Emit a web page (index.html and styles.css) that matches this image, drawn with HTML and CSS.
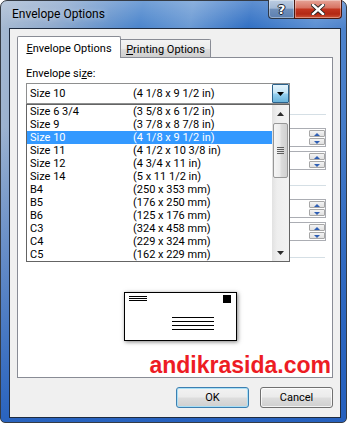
FILE: index.html
```html
<!DOCTYPE html>
<html lang="en">
<head>
    <meta charset="UTF-8">
    <meta name="viewport" content="width=device-width, initial-scale=1.0">
    <title>Envelope Options</title>
    <link rel="stylesheet" href="styles.css">
</head>
<body>
    <div class="window">
        <div class="titlebar">
            <span class="title">Envelope Options</span>
            <div class="caption-buttons">
                <div class="cap-btn help">?</div>
                <div class="cap-btn close">
                    <svg width="14" height="11" viewBox="0 0 14 11">
                        <path d="M2 1 L12 10 M12 1 L2 10" stroke="#1f1f1f" stroke-width="4.2" stroke-linecap="square"/>
                        <path d="M2 1 L12 10 M12 1 L2 10" stroke="#fff" stroke-width="2.4" stroke-linecap="square"/>
                    </svg>
                </div>
            </div>
        </div>

        <div class="client">
            <div class="tabs">
                <div class="tab active"><u>E</u>nvelope Options</div>
                <div class="tab"><u>P</u>rinting Options</div>
            </div>

            <div class="panel">
                <div class="label">Envelope si<u>z</u>e:</div>

                <div class="combo-wrap">
                    <div class="combo">
                        <div class="row combo-value"><span>Size 10</span><span>(4 1/8 x 9 1/2 in)</span></div>
                        <div class="combo-btn">
                            <svg width="7" height="4" viewBox="0 0 7 4"><path d="M0 0 H7 L3.5 4 Z" fill="#000"/></svg>
                        </div>
                    </div>

                    <!-- open drop-down list, lies over the fields below -->
                    <div class="dropdown">
                        <div class="list">
                            <div class="row"><span>Size 6 3/4</span><span>(3 5/8 x 6 1/2 in)</span></div>
                            <div class="row"><span>Size 9</span><span>(3 7/8 x 8 7/8 in)</span></div>
                            <div class="row selected"><span>Size 10</span><span>(4 1/8 x 9 1/2 in)</span></div>
                            <div class="row"><span>Size 11</span><span>(4 1/2 x 10 3/8 in)</span></div>
                            <div class="row"><span>Size 12</span><span>(4 3/4 x 11 in)</span></div>
                            <div class="row"><span>Size 14</span><span>(5 x 11 1/2 in)</span></div>
                            <div class="row"><span>B4</span><span>(250 x 353 mm)</span></div>
                            <div class="row"><span>B5</span><span>(176 x 250 mm)</span></div>
                            <div class="row"><span>B6</span><span>(125 x 176 mm)</span></div>
                            <div class="row"><span>C3</span><span>(324 x 458 mm)</span></div>
                            <div class="row"><span>C4</span><span>(229 x 324 mm)</span></div>
                            <div class="row"><span>C5</span><span>(162 x 229 mm)</span></div>
                        </div>
                        <div class="scrollbar">
                            <div class="sb-arrow">
                                <svg width="7" height="4" viewBox="0 0 7 4"><path d="M0 4 H7 L3.5 0 Z" fill="#2b2b2b"/></svg>
                            </div>
                            <div class="sb-track">
                                <div class="sb-thumb">
                                    <div class="grip"><span></span><span></span><span></span><span></span></div>
                                </div>
                            </div>
                            <div class="sb-arrow">
                                <svg width="7" height="4" viewBox="0 0 7 4"><path d="M0 0 H7 L3.5 4 Z" fill="#2b2b2b"/></svg>
                            </div>
                        </div>
                    </div>
                </div>

                <div class="fields">
                    <div class="group">
                        <div class="spin-field">
                            <div class="spin"><span class="up"></span><span class="down"></span></div>
                        </div>
                        <div class="spin-field">
                            <div class="spin"><span class="up"></span><span class="down"></span></div>
                        </div>
                    </div>
                    <div class="group">
                        <div class="spin-field">
                            <div class="spin"><span class="up"></span><span class="down"></span></div>
                        </div>
                        <div class="spin-field">
                            <div class="spin"><span class="up"></span><span class="down"></span></div>
                        </div>
                    </div>
                    <div class="group last"></div>
                </div>

                <div class="envelope">
                    <div class="env-top">
                        <div class="return-lines"><span></span><span></span><span></span></div>
                        <div class="stamp"></div>
                    </div>
                    <div class="address-lines"><span></span><span></span><span></span><span></span></div>
                </div>

                <div class="watermark">andikrasida.com</div>
            </div>

            <div class="buttons">
                <button class="btn default">OK</button>
                <button class="btn">Cancel</button>
            </div>
        </div>
    </div>
</body>
</html>
```

FILE: styles.css
```css
body {
    margin: 0;
    background: #fff;
    font-family: Roboto, "Noto Sans", sans-serif;
    font-size: 11px;
    color: #000;
}

.window {
    width: 347px;
    height: 423px;
    box-sizing: border-box;
    border: 1px solid #353b44;
    border-radius: 7px 7px 5px 5px;
    padding: 0 5px 4px 8px;
    display: flex;
    flex-direction: column;
    background:
        linear-gradient(180deg, rgba(255, 255, 255, 0.22) 0, rgba(255, 255, 255, 0) 27px),
        linear-gradient(180deg, rgba(37, 96, 190, 0) 30%, rgba(37, 96, 190, 0.95) 100%),
        linear-gradient(100deg, #a7bad2 0%, #8ea9cd 14%, #4b85cc 34%, #6b9ad4 46%, #3170c4 60%, #5b8fd2 76%, #2b64bb 100%);
}

/* title bar */
.titlebar {
    height: 27px;
    display: flex;
    align-items: flex-start;
}
.title {
    padding: 5px 0 0 3px;
    line-height: 16px;
    font-size: 12px;
    text-shadow: 0 0 6px rgba(255, 255, 255, 0.55);
}
.caption-buttons {
    margin: -1px -1px 0 auto;
    display: flex;
}
.cap-btn {
    height: 19px;
    box-sizing: border-box;
    border: 1px solid #2d3848;
    border-top: none;
    display: flex;
    align-items: center;
    justify-content: center;
    box-shadow: inset 0 0 0 1px rgba(255, 255, 255, 0.35);
}
.help {
    width: 26px;
    border-radius: 0 0 0 4px;
    border-right: none;
    background: linear-gradient(180deg, #bccde2 0%, #a3b9d5 45%, #6f8fba 52%, #5d80b1 100%);
    color: #fff;
    font-family: "DejaVu Sans", sans-serif;
    font-weight: bold;
    font-size: 13px;
    text-shadow: 0 0 1px #1b2433, 1px 0 0 #1b2433, -1px 0 0 #1b2433, 0 1px 0 #1b2433, 0 -1px 0 #1b2433;
}
.close {
    width: 48px;
    border-radius: 0 0 4px 0;
    border-color: #4a1810;
    background: linear-gradient(180deg, #e6a497 0%, #d87564 42%, #c2351f 52%, #b32814 78%, #cf5638 100%);
}

/* client area */
.client {
    flex: 1;
    border: 1px solid #1e2b3f;
    background: #f0f0f0;
    padding: 7px 7px 0 7px;
    display: flex;
    flex-direction: column;
}

.tabs {
    display: flex;
    align-items: flex-end;
    position: relative;
    z-index: 1;
}
.tab {
    box-sizing: border-box;
    border: 1px solid #898c95;
    border-bottom: none;
    text-align: center;
    line-height: 13px;
}
.tab.active {
    width: 104px;
    height: 22px;
    padding-top: 5px;
    margin-bottom: -1px;
    background: #fff;
    border-radius: 2px 2px 0 0;
    position: relative;
    z-index: 1;
}
.tab:not(.active) {
    width: 91px;
    height: 18px;
    padding-top: 3px;
    margin-left: -1px;
    border-radius: 0 2px 0 0;
    background: linear-gradient(180deg, #f3f3f3 0%, #ebebeb 50%, #dddddd 52%, #cfcfcf 100%);
}

.panel {
    border: 1px solid #898c95;
    background: #fff;
    width: 316px;
    box-sizing: border-box;
    padding: 9px 0 2px 0;
}

.label {
    line-height: 13px;
    padding-left: 8px;
}

/* combo box */
.combo-wrap {
    position: relative;
    margin: 3px 0 0 8px;
    width: 264px;
}
.combo {
    height: 21px;
    box-sizing: border-box;
    border: 1px solid #8e8f8f;
    display: flex;
    background: #fff;
}
.combo-value {
    flex: 1;
    line-height: 19px;
}
.combo-btn {
    width: 17px;
    box-sizing: border-box;
    border: 1px solid #2c628b;
    border-radius: 1px;
    background: linear-gradient(180deg, #e5f4fc 0%, #c4e5f6 48%, #98d1ef 52%, #68b3db 100%);
    display: flex;
    align-items: center;
    justify-content: center;
}

.row {
    display: grid;
    grid-template-columns: 103px 1fr;
    padding-left: 3px;
    white-space: nowrap;
}

.dropdown {
    position: absolute;
    top: 21px;
    left: 0;
    width: 264px;
    box-sizing: border-box;
    border: 1px solid #646464;
    background: #fff;
    display: flex;
    z-index: 2;
}
.list {
    flex: 1;
}
.list .row {
    height: 13px;
    line-height: 13px;
}
.list .row.selected {
    background: #3399ff;
    color: #fff;
}

.scrollbar {
    width: 17px;
    display: flex;
    flex-direction: column;
    background: linear-gradient(90deg, #e2e2e2 0%, #eeeeee 30%, #f2f2f2 100%);
}
.sb-arrow {
    height: 17px;
    display: flex;
    align-items: center;
    justify-content: center;
}
.sb-track {
    flex: 1;
    padding: 1px 1px 0 1px;
}
.sb-thumb {
    height: 55px;
    box-sizing: border-box;
    border: 1px solid #979797;
    border-radius: 2px;
    background: linear-gradient(90deg, #f5f5f5 0%, #ececec 45%, #dcdcdc 55%, #d0d0d0 100%);
    display: flex;
    align-items: center;
    justify-content: center;
}
.grip {
    display: flex;
    flex-direction: column;
    gap: 1px;
}
.grip span {
    width: 7px;
    height: 1px;
    background: #5f5f5f;
}

/* fields hidden behind the open list */
.fields {
    margin: 10px 6px 0 150px;
    height: 178px;
}
.group {
    border-top: 1px solid #d5dfe5;
    padding: 13px 0 15px 0;
    display: flex;
    flex-direction: column;
    gap: 4px;
}
.group + .group {
    padding-bottom: 16px;
}
.group.last {
    padding: 0;
    margin-right: 1px;
}
.spin-field {
    height: 19px;
    box-sizing: border-box;
    border: 1px solid #abadb3;
    background: #fff;
    display: flex;
    justify-content: flex-end;
    padding: 1px 0 1px 0;
}
.spin {
    width: 16px;
    display: flex;
    flex-direction: column;
    gap: 1px;
}
.spin span {
    flex: 1;
    box-sizing: border-box;
    border: 1px solid #a7a7a7;
    border-radius: 1px;
    background: linear-gradient(180deg, #f4f4f4, #e0e0e0);
    position: relative;
}
.spin span::after {
    content: "";
    position: absolute;
    left: 4px;
    top: 2px;
    border-left: 3px solid transparent;
    border-right: 3px solid transparent;
}
.spin .up::after {
    border-bottom: 3px solid #2f5fb4;
}
.spin .down::after {
    border-top: 3px solid #2f5fb4;
}

/* envelope preview */
.envelope {
    margin-left: 106px;
    width: 113px;
    height: 49px;
    box-sizing: border-box;
    border: 1px solid #000;
    background: #fff;
    box-shadow: 1px 1px 4px rgba(0, 0, 0, 0.5);
    padding: 2px 5px 0 4px;
}
.env-top {
    display: flex;
    justify-content: space-between;
    align-items: flex-start;
}
.return-lines {
    margin-top: 1px;
    display: flex;
    flex-direction: column;
    gap: 1px;
}
.return-lines span {
    width: 18px;
    height: 1px;
    background: #000;
}
.stamp {
    width: 8px;
    height: 8px;
    background: #000;
}
.address-lines {
    margin: 14px 0 0 43px;
    display: flex;
    flex-direction: column;
    gap: 3px;
}
.address-lines span {
    width: 42px;
    height: 1px;
    background: #000;
}

.watermark {
    margin-top: 14px;
    text-align: right;
    padding-right: 1px;
    font-family: "Liberation Sans", Arial, sans-serif;
    font-weight: bold;
    font-size: 23px;
    line-height: 20px;
    color: #ed1c24;
}

/* dialog buttons */
.buttons {
    display: flex;
    justify-content: flex-end;
    gap: 11px;
    margin-top: 9px;
    width: 316px;
}
.btn {
    width: 73px;
    height: 21px;
    padding: 0;
    font-family: Roboto, "Noto Sans", sans-serif;
    font-size: 11px;
    color: #000;
    border: 1px solid #707070;
    border-radius: 3px;
    background: linear-gradient(180deg, #f2f2f2 0%, #ebebeb 48%, #dddddd 52%, #cfcfcf 100%);
    box-shadow: inset 0 0 0 1px rgba(255, 255, 255, 0.75);
}
.btn.default {
    border-color: #3c7fb1;
    box-shadow: inset 0 0 0 1px #a8dff6;
}
```
